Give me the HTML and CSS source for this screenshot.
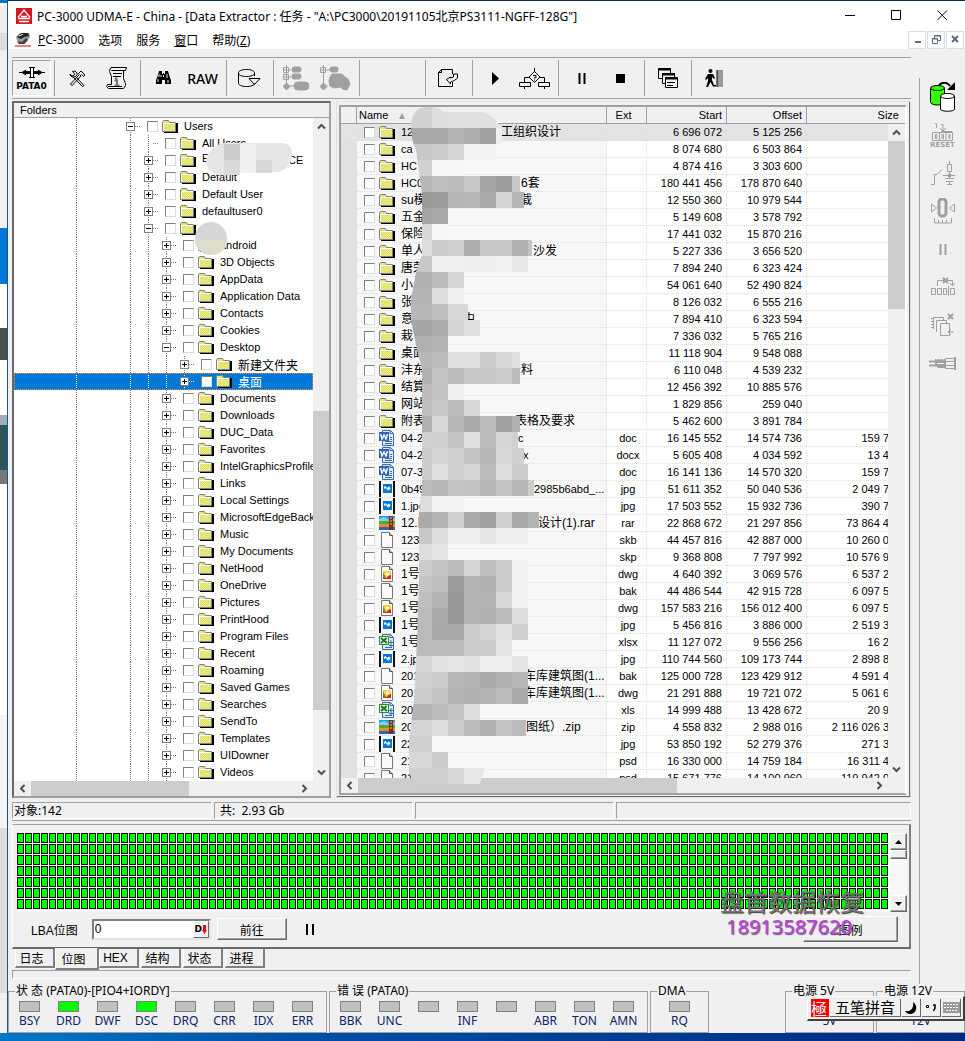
FILE: index.html
```html
<!DOCTYPE html>
<html lang="zh-CN">
<head>
  <meta charset="UTF-8" />
  <meta name="viewport" content="width=device-width, initial-scale=1.0" />
  <title>PC-3000 UDMA-E - Data Extractor</title>
  <link rel="stylesheet" href="styles.css">
</head>
<body>
  <!-- shared icons -->
  <svg class="defs" aria-hidden="true">
    <defs>
      <pattern id="dither" width="2" height="2" patternUnits="userSpaceOnUse">
        <rect width="2" height="2" fill="#cfcfe8"/>
        <rect width="1" height="1" fill="#ffff00"/><rect x="1" y="1" width="1" height="1" fill="#ffff00"/>
      </pattern>
      <pattern id="cell" width="8" height="11" patternUnits="userSpaceOnUse">
        <rect width="7" height="10" fill="#000"/><rect x="1" y="1" width="5" height="8" fill="#00ff00"/>
      </pattern>
      <symbol id="i-folder" viewBox="0 0 16 14">
        <path d="M2 13h13V4" fill="none" stroke="#000" stroke-width="2"/>
        <path d="M.5 12.500V2.500l1-1h5l1 2h6v9z" fill="url(#dither)" stroke="#808080"/>
        <path d="M1.500 12V4.500H13" fill="none" stroke="#fff"/>
      </symbol>
      <symbol id="i-blank" viewBox="0 0 16 16">
        <path d="M2.500.5h8l3 3v12h-11z" fill="#fafafa" stroke="#777"/><path d="M10.500.5v3h3" fill="#ccc" stroke="#555"/>
      </symbol>
      <symbol id="i-doc" viewBox="0 0 16 16">
        <path d="M3.500.5h8l3 3v12h-11z" fill="#dce9f8" stroke="#3a6ea5"/>
        <path d="M11 .5v3h3.500M6 11.500h7M6 13.500h7M11 7.500h2M11 9.500h2" fill="none" stroke="#3a6ea5"/>
        <rect x="0" y="2" width="10" height="9" fill="#2b5fb4"/>
        <path d="M1.500 4l1.500 5 2-4 2 4 1.500-5" fill="none" stroke="#fff" stroke-width="1.500"/>
      </symbol>
      <symbol id="i-xls" viewBox="0 0 16 16">
        <path d="M3.500.5h8l3 3v12h-11z" fill="#dce9f8" stroke="#3a6ea5"/>
        <path d="M11 .5v3h3.500M6 13.500h7M12 6v7M10 11.500h4M10 8.500h4" fill="none" stroke="#3a6ea5"/>
        <rect x=".5" y="2.500" width="9" height="8" fill="#e6f5e2" stroke="#2d8a36"/>
        <path d="M2 4l6 5M7.500 4L2 9" stroke="#187a28" stroke-width="2"/>
      </symbol>
      <symbol id="i-jpg" viewBox="0 0 16 16">
        <rect width="16" height="16" fill="#111"/><path d="M2 0h12v16H2z" fill="#f7f7f7"/>
        <rect x="4" y="3" width="9" height="9" fill="#0078d7"/>
        <path d="M5 8V6l1.500-1L8 7l2-1.500L12 8v-.5h-1V9L9.500 8v2L8 8.500 7 7z" fill="#fff"/>
      </symbol>
      <symbol id="i-rar" viewBox="0 0 16 14">
        <rect width="16" height="5" fill="#2c9be0"/><path d="M0 3l5-2 6 3 5-2v3H0z" fill="#7fd0f5"/>
        <rect y="5" width="16" height="4" fill="#58a636"/><rect y="8" width="16" height="3" fill="#f58a1f"/>
        <rect y="11" width="16" height="3" fill="#2267c5"/><rect x="10" width="4" height="14" fill="#7b2c16"/>
        <path d="M11 2h2M11 5h2M11 8h2" stroke="#f5d64a"/>
      </symbol>
      <symbol id="i-dwg" viewBox="0 0 16 16">
        <path d="M2.500.5h8l3 3v12h-11z" fill="#fff" stroke="#777"/><path d="M10.500.5v3h3" fill="#ddd" stroke="#555"/>
        <rect x="4" y="5" width="8" height="8" fill="#f6d541"/><path d="M4 13h8v-4l-3 1-1 2-4-1z" fill="#e0251b"/><path d="M4 11V6l3 6z" fill="#3fa43c"/><circle cx="8.500" cy="8" r="1.500" fill="#fff"/>
      </symbol>
      <symbol id="i-up" viewBox="0 0 9 9"><path d="M1 6.500L4.500 3 8 6.500" fill="none" stroke="#505050" stroke-width="2"/></symbol>
      <symbol id="i-down" viewBox="0 0 9 9"><path d="M1 2.500L4.500 6 8 2.500" fill="none" stroke="#505050" stroke-width="2"/></symbol>
      <symbol id="i-left" viewBox="0 0 9 9"><path d="M6.500 1L3 4.500 6.500 8" fill="none" stroke="#505050" stroke-width="2"/></symbol>
      <symbol id="i-right" viewBox="0 0 9 9"><path d="M2.500 1L6 4.500 2.500 8" fill="none" stroke="#505050" stroke-width="2"/></symbol>
    </defs>
  </svg>

  <div class="desktop">
    <div class="behind"></div>
    <div class="window">
      <header class="titlebar">
        <svg class="logo" width="16" height="16" viewBox="0 0 16 16"><rect width="16" height="16" fill="#d8161d"/><path d="M2 9.500L8 2l6 7.500M2 10.500h12M3 13.500h10M5 8.500h6" fill="none" stroke="#fff" stroke-width="1.300"/></svg>
        <h1>PC-3000 UDMA-E - China - [Data Extractor : 任务 - "A:\PC3000\20191105北京PS3111-NGFF-128G"]</h1>
        <div class="win-buttons">
          <button aria-label="最小化"><svg width="11" height="11"><path d="M0 5.500h10" stroke="#000"/></svg></button>
          <button aria-label="最大化"><svg width="11" height="11"><path d="M.5.5h9v9h-9z" fill="none" stroke="#000"/></svg></button>
          <button aria-label="关闭"><svg width="11" height="11"><path d="M.5.5l9.500 9.500M10 .5L.5 10" stroke="#000"/></svg></button>
        </div>
      </header>

      <nav class="menubar">
        <svg width="16" height="15" viewBox="0 0 16 15"><path d="M1 5l4-4h9l1 4-5 7H3z" fill="#999"/><path d="M2 5l4-4h7l1 3-5 1-3 2z" fill="#222"/><path d="M3 9l4 1 4-4 2 2-4 4H4z" fill="#444"/><path d="M4 4l4-2" stroke="#fff"/><path d="M0 14h16" stroke="#e00000"/></svg>
        <a href="#"><u>P</u>C-3000</a>
        <a href="#">选项</a>
        <a href="#">服务</a>
        <a href="#"><u>窗</u>口</a>
        <a href="#">帮助(<u>Z</u>)</a>
        <div class="mdi-buttons">
          <button aria-label="最小化窗口"><svg width="9" height="9"><path d="M2 7h6" stroke="#5a6b80" stroke-width="2"/></svg></button>
          <button aria-label="还原窗口"><svg width="9" height="9"><path d="M2.500 3V.5h6v5H6M.5 3.500h5v5h-5zM2 1h7M0 4h6" fill="none" stroke="#5a6b80"/></svg></button>
          <button aria-label="关闭窗口"><svg width="9" height="9"><path d="M1 1l6 6M7 1L1 7" stroke="#5a6b80" stroke-width="2"/></svg></button>
        </div>
      </nav>

      <div class="content">
        <main class="main">
          <div class="toolbar">
            <button class="port">
              <svg width="28" height="13" viewBox="0 0 28 13"><path d="M1 6.500h26" stroke="#000"/><path d="M3 6.500l5-3v6zM25 6.500l-5-3v6z"/><path d="M8 6.500h12" stroke="#000" stroke-width="3"/><path d="M12.500 1v11M15.500 1v11M11 1.500h6M11 11.500h6" stroke="#000"/><path d="M14 2v9" stroke="#fff" stroke-width="2"/></svg>
              <span>PATA0</span>
            </button>
            <div class="group">
              <button aria-label="工具"><svg width="17" height="17" viewBox="0 0 17 17"><path d="M3 15.500L12 6M1.500 14L10.500 4.500M1.500 14l1.500 1.500M9 4l3-3 4 4-1.500 1.500-2-2-1.500 1.500M15 15.500L6 6M13.500 16.500L4.500 7.500M13.500 16.500l1.500-1M1 4l2 2 2-.5.500-2-2-2 2.500-.5 2 2v2L6 7H3L1 5z" fill="none" stroke="#000"/></svg></button>
              <button aria-label="信息"><svg width="24" height="24" viewBox="0 0 24 24"><path d="M6 1.500h15.500l-1 3h-2v8l2 5v2l-2 3H3.500l-2-2 1-2h4v-8l-2-5 .5-2.500zM6.500 4.500h12M8 7.500h9M8 10.500h8" fill="none" stroke="#000"/><path d="M10 12.500h2.500M12 14v6M9.500 19.500h5M9.500 14.500h3" stroke="#777" stroke-width="2"/><path d="M3 20.500h14" stroke="#000"/></svg></button>
            </div>
            <div class="group">
              <button aria-label="查找"><svg width="15" height="14" viewBox="0 0 15 14"><path d="M3 0h3v3h1V2h1v1h1V0h3l2 7 1 2v4H9V9H6v4H0V9l1-2z"/><path d="M3 3v3M5 4v2M11 3v4M2 8v3M12 9v3M7.500 4v2" stroke="#f0f0f0"/></svg></button>
              <button class="raw">RAW</button>
            </div>
            <div class="group">
              <button aria-label="打开磁盘"><svg width="23" height="18" viewBox="0 0 23 18"><path d="M.5 4c0-2 3-3.500 8-3.500s8 1.500 8 3.500-3 3.500-8 3.500S.5 6 .5 4v10c0 2 3 3.500 8 3.500 4 0 8-1 8-3M16.500 4v3M11 9.500h11l-5.500 6z" fill="none" stroke="#000"/></svg></button>
            </div>
            <div class="group">
              <button aria-label="文件树"><svg width="27" height="26" viewBox="0 0 27 26" fill="#a0a0a0" stroke="#a0a0a0"><path d="M.5 2.500h5v5h-5zM3.500 0v22M1 5h7M.5 9.500h5v5h-5zM1 12h7" fill="none"/><rect x="9" y="2" width="9" height="5" rx="2"/><rect x="9" y="9" width="9" height="5" rx="2"/><path d="M3.500 18l3.500 3.500L3.500 25 0 21.500z"/><path d="M7 21h4"/><rect x="11" y="17" width="15" height="8" rx="4"/></svg></button>
              <button aria-label="地图"><svg width="31" height="27" viewBox="0 0 31 27" fill="#a0a0a0" stroke="#a0a0a0"><path d="M.5 2.500h5v5h-5zM3.500 0v22M1 5h9" fill="none"/><rect x="10" y="2" width="8" height="5" rx="2"/><path d="M3.500 18L7 21.500 3.500 25 0 21.500zM10 12l2-3h10l3 3 3 2 2 5-3 6-4-1-3-2-6 1-4-2-1-5z"/></svg></button>
            </div>
            <div class="group blank"></div>
            <div class="group">
              <button aria-label="导出"><svg width="21" height="19" viewBox="0 0 21 19"><path d="M14.500 5V.5h-11l-3 3v14h14V13M.5 3.500h3v-3" fill="none" stroke="#000"/><path d="M19.500 5v4c-2 2-4 3-7 4v2l-4-4.500 4-2.500v1l3-1V5z" fill="#f0f0f0" stroke="#000"/></svg></button>
            </div>
            <div class="group">
              <button aria-label="开始"><svg width="7" height="13"><path d="M0 0l7 6.500L0 13z"/></svg></button>
              <button aria-label="条件"><svg width="31" height="21" viewBox="0 0 31 21"><path d="M15.500 0v4M15.500 3.500l5.500 5.500-5.500 5.500L10 9zM10 9.500H5.500V14M21 9.500h4.500V14M.5 14.500h11v4H.5zM19.500 14.500h11v4h-11zM5.500 19v2M25.500 19v2" fill="none" stroke="#000"/><path d="M14 7.500h3v2h-1.500v1M15 12h1" fill="none" stroke="#000"/></svg></button>
            </div>
            <div class="group">
              <button aria-label="暂停"><svg width="8" height="11"><path d="M1.500 0v11M6.500 0v11" stroke="#000" stroke-width="2"/></svg></button>
              <button aria-label="停止"><svg width="9" height="9"><rect width="9" height="9"/></svg></button>
            </div>
            <div class="group">
              <button aria-label="窗口列表"><svg width="20" height="21" viewBox="0 0 20 21"><g fill="#f0f0f0" stroke="#000"><path d="M.5.5h12v10H.5z"/><path d="M4.500 5.500h12v10h-12z"/><path d="M7.500 9.500h12v10h-12z"/></g><path d="M0 1.500h13M4 6.500h13M7 10.500h13" stroke="#000" stroke-width="2"/><path d="M9 14.500h8M9 17.500h6" stroke="#000"/></svg></button>
            </div>
            <div class="group last">
              <button aria-label="退出"><svg width="19" height="19" viewBox="0 0 19 19"><rect x="12" y="1" width="6" height="17" fill="#999"/><path d="M12 1v17" stroke="#000"/><circle cx="5.500" cy="2" r="2"/><path d="M3 5h5l2 4-1 1-2-2v3l2 5h2v1.500H8L5.500 13 3 18H1l2-6V9l-2 2-1-1z"/></svg></button>
            </div>
          </div>

          <div class="split">
            <section class="folders">
              <h2>Folders</h2>
              <div class="tree-area">
                <div class="tree" id="tree"></div>
                <div class="vscroll tree-v">
                  <button aria-label="向上"><svg width="9" height="9"><use href="#i-up"/></svg></button>
                  <div class="track"><div class="thumb"></div></div>
                  <button aria-label="向下"><svg width="9" height="9"><use href="#i-down"/></svg></button>
                </div>
                <svg class="smudge" width="120" height="115" viewBox="190 140 120 115">
                  <path d="M206 160q3-14 18-17h60q8 2 8 10 0 16-14 19h-32q-16 4-30 3-10-4-10-15z" fill="#e6e6e6"/>
                  <path d="M224 144h16v16h-16z" fill="#cbcbcb"/><path d="M224 160h16v15h-16z" fill="#dadada"/><path d="M240 144h16v29h-16z" fill="#f0f0f0"/><path d="M256 160h16v13h-16z" fill="#d8d8d8"/>
                  <circle cx="211" cy="238" r="16" fill="#d6d6d6"/><path d="M195 240h32c0 20-32 20-32 0z" fill="#dedccb"/>
                </svg>
              </div>
              <div class="hscroll tree-h">
                <button aria-label="向左"><svg width="9" height="9"><use href="#i-left"/></svg></button>
                <div class="track"><div class="thumb"></div></div>
                <button aria-label="向右"><svg width="9" height="9"><use href="#i-right"/></svg></button>
              </div>
            </section>

            <section class="files">
              <div class="files-frame">
                <div class="list-area">
                  <table>
                    <thead>
                      <tr>
                        <th class="c-mark"></th>
                        <th class="c-name">Name <span class="sort"></span></th>
                        <th class="c-ext">Ext</th>
                        <th class="c-num">Start</th>
                        <th class="c-num">Offset</th>
                        <th class="c-size">Size</th>
                      </tr>
                    </thead>
                    <tbody id="files"></tbody>
                  </table>
                  <div class="vscroll list-v">
                    <button aria-label="向上"><svg width="9" height="9"><use href="#i-up"/></svg></button>
                    <div class="track"><div class="thumb"></div></div>
                    <button aria-label="向下"><svg width="9" height="9"><use href="#i-down"/></svg></button>
                  </div>
                </div>
                <div class="hscroll list-h">
                  <button aria-label="向左"><svg width="9" height="9"><use href="#i-left"/></svg></button>
                  <div class="track"><div class="thumb"></div></div>
                  <button aria-label="向右"><svg width="9" height="9"><use href="#i-right"/></svg></button>
                </div>
                <svg class="mosaic" id="mosaic" width="140" height="683" viewBox="408 107 140 683"></svg>
              </div>
            </section>
          </div>

          <div class="counts">
            <span>对象:142</span><span>共:&nbsp; 2.93 Gb</span><span></span><span></span>
          </div>

          <section class="map-panel">
            <div class="map-row">
              <svg class="map"><rect width="871" height="77" fill="url(#cell)"/></svg>
              <div class="classic-scroll">
                <button aria-label="向上"><svg width="7" height="4"><path d="M0 4l3.500-4L7 4z"/></svg></button>
                <div class="classic-thumb"></div>
                <button aria-label="向下"><svg width="7" height="4"><path d="M0 0l3.500 4L7 0z"/></svg></button>
              </div>
            </div>
            <div class="map-tools">
              <label for="lba">LBA位图</label>
              <div class="lba-box">
                <input type="text" id="lba" value="0" />
                <button>D<svg width="5" height="9"><path d="M1 0h3v5h1L2.500 9 0 5h1z" fill="#f00"/></svg></button>
              </div>
              <button class="raised go">前往</button>
              <button class="pause" aria-label="暂停"><svg width="8" height="11"><path d="M1 0v11M7 0v11" stroke="#000" stroke-width="2"/></svg></button>
              <button class="raised legend">图例</button>
            </div>
            <div class="watermark"><b>盘首数据恢复</b><span>18913587620</span></div>
          </section>

          <div class="tabs">
            <button>日志</button><button class="active">位图</button><button>HEX</button><button>结构</button><button>状态</button><button>进程</button>
          </div>
          <div class="strip"></div>
        </main>

        <aside class="side">
          <button aria-label="磁盘切换"><svg width="26" height="30" viewBox="0 0 26 30"><path d="M.5 6v14c0 4 14 4 14 0V6" fill="#3f0" stroke="#000"/><ellipse cx="7.500" cy="6" rx="7" ry="2.500" fill="#3f0" stroke="#000"/><path d="M10.500 14v13c0 3 14 3 14 0V14" fill="#fff" stroke="#000"/><ellipse cx="17.500" cy="14" rx="7" ry="2.500" fill="#fff" stroke="#000"/><path d="M9 3c5-4 9-2 11 1" fill="none" stroke="#000" stroke-width="2"/><path d="M25 0v8h-8z"/></svg></button>
          <button class="reset"><svg width="22" height="19" viewBox="0 0 22 19"><path d="M3 1.500h1.500V6M9 2.500h2V8M8 6l3 3 3-3M.5 10.500h20v8H.5zM7.500 10v8M14 10v8M3.500 12.500h1.500v4H3.500zM10 12.500h1.500v4H10zM17 12.500h1v4h-1zM9 9.500h11" fill="none" stroke="#a0a0a0"/></svg><span>RESET</span></button>
          <button aria-label="电源"><svg width="24" height="25" viewBox="0 0 24 25"><path d="M0 23.500h3.500v-10H6l5-5M12 14.500h12M18.500 0v3M16.500 3.500h4v7h-4zM18.500 11v6M14 17.500h9M15 20.500h7M18.500 20v4M16 23.500h5" fill="none" stroke="#a0a0a0"/><circle cx="18.500" cy="14.500" r="2" fill="#a0a0a0"/></svg></button>
          <button aria-label="归零"><svg width="24" height="26" viewBox="0 0 24 26"><path d="M.5 6v8l5-4zM23.500 6v8l-5-4zM3.500 20v5h17v-5M7.500 22v3M11.500 22v3M15.500 22v3" fill="none" stroke="#a0a0a0"/><rect x="8" y="1" width="7" height="17" rx="3" fill="none" stroke="#a0a0a0" stroke-width="3"/></svg></button>
          <button aria-label="暂停"><svg width="8" height="11"><path d="M1.500 0v11M6.500 0v11" stroke="#a0a0a0" stroke-width="2"/></svg></button>
          <button aria-label="删除扇区"><svg width="24" height="20" viewBox="0 0 24 20"><path d="M.5 11.500h4v6h-4zM6.500 11.500h4v6h-4zM12.500 11.500h3v6h-3zM17.500 9v10M19.500 11.500h4v6h-4zM6.500 9V3.500h15V8M19 6l2.500 3L24 6" fill="none" stroke="#a0a0a0"/><path d="M12 1l5 5M17 1l-5 5" stroke="#a0a0a0" stroke-width="2"/></svg></button>
          <button aria-label="复制"><svg width="24" height="24" viewBox="0 0 24 24"><path d="M9.500 10.500h9v12h-9zM5.500 19V7.500h10V10M2.500 16V4.500h10V7M0 5.500h2M0 8.500h2M0 11.500h2M0 14.500h2M17 19h6M20 16l-3 3 3 3" fill="none" stroke="#a0a0a0"/><path d="M17 1l5 5M22 1l-5 5" stroke="#a0a0a0" stroke-width="2"/></svg></button>
          <button aria-label="连接"><svg width="27" height="13" viewBox="0 0 27 13"><path d="M0 4.500h8M0 8.500h8" stroke="#a0a0a0" stroke-width="2"/><path d="M16.500 1.500h9v10h-9zM16 4.500h10M16 8.500h10" fill="none" stroke="#a0a0a0"/><path d="M26 0v13" stroke="#a0a0a0" stroke-width="2"/><path d="M6 2h10v9H9L6 8z" fill="#a0a0a0"/><path d="M8 1v2M11 1v2M14 1v2M8 6.500h7" stroke="#f0f0f0"/></svg></button>
        </aside>
      </div>

      <footer class="lights">
        <fieldset class="eight">
          <legend>状 态 (PATA0)-[PIO4+IORDY]</legend>
          <span><i></i>BSY</span><span><i class="on"></i>DRD</span><span><i></i>DWF</span><span><i class="on"></i>DSC</span><span><i></i>DRQ</span><span><i></i>CRR</span><span><i></i>IDX</span><span><i></i>ERR</span>
        </fieldset>
        <fieldset class="eight">
          <legend>错 误 (PATA0)</legend>
          <span><i></i>BBK</span><span><i></i>UNC</span><span><i></i></span><span><i></i>INF</span><span><i></i></span><span><i></i>ABR</span><span><i></i>TON</span><span><i></i>AMN</span>
        </fieldset>
        <fieldset class="dma">
          <legend>DMA</legend>
          <span><i></i>RQ</span>
        </fieldset>
        <fieldset class="power first">
          <legend>电源 5V</legend>
          <span>5V</span>
        </fieldset>
        <fieldset class="power">
          <legend>电源 12V</legend>
          <span>12V</span>
        </fieldset>
      </footer>
      <div class="ime">
        <b>極</b><span>五笔拼音</span>
        <button aria-label="全角半角"><svg width="12" height="12"><path d="M8 0c6 4 3 12-3 12-2 0-4-1-5-3 6 1 9-3 8-9z"/></svg></button>
        <button aria-label="标点"><svg width="10" height="8"><path d="M.5 1.500h2v2h-2z" fill="none" stroke="#000"/><path d="M7 1h2v3L7.500 7" fill="none" stroke="#000" stroke-width="1.500"/></svg></button>
        <button aria-label="软键盘"><svg width="17" height="11"><rect width="17" height="11" fill="#999"/><path d="M1 2.500h15M1 5.500h15M3 8.500h11" stroke="#fff" stroke-dasharray="2 1"/></svg></button>
      </div>
    </div>
  </div>

  <script src="script.js"></script>
</body>
</html>
```
FILE: styles.css
```css
* {
  box-sizing: border-box;
}
body {
  margin: 0;
  min-height: 100vh;
  font-family: "Liberation Sans", "Noto Sans CJK SC", sans-serif;
  font-size: 11px;
  color: #000;
  background: linear-gradient(90deg, #0078c8, #0050a8 30%, #002a80);
}
button {
  padding: 0;
  border: 0;
  background: none;
  font: inherit;
  color: inherit;
  display: flex;
  align-items: center;
  justify-content: center;
}
a {
  color: inherit;
  text-decoration: none;
}
svg {
  display: block;
  flex: none;
}
.defs {
  position: absolute;
  width: 0;
  height: 0;
}
.desktop {
  display: grid;
  grid-template-columns: 7px 1fr;
}
/* edge of the window behind */
.behind {
  background: linear-gradient(#0078d7 3px, #fff 3px 6px, #eee 6px 33px, #ddd 33px 50px, #f0f0f0 50px 228px, #0078d7 228px 284px, #fff 284px 328px, #4c4f50 328px 360px, #fff 360px 415px, #9fb0b5 415px 425px, #2c555a 425px 470px, #777 470px 484px, #fff 484px 715px, #f4f4f4 715px 828px, #dcdcdc 828px 993px, #f0f0f0 993px);
}
.window {
  position: relative;
  background: #f0f0f0;
  border-top: 1px solid #0c2850;
  border-left: 1px solid #17568c;
  min-width: 0;
}

/* title and menu */
.titlebar {
  display: flex;
  align-items: center;
  height: 29px;
  padding-left: 8px;
  background: #fff;
}
.titlebar h1 {
  margin: 0 0 0 5px;
  flex: 1;
  min-width: 0;
  overflow: hidden;
  white-space: nowrap;
  font: 12px "Noto Sans", "Noto Sans CJK SC", sans-serif;
}
.win-buttons {
  display: flex;
}
.win-buttons button {
  width: 46px;
  height: 28px;
}
.menubar {
  display: flex;
  align-items: center;
  gap: 14px;
  height: 19px;
  padding-left: 7px;
  background: #fff;
  font: 12px "Noto Sans", "Noto Sans CJK SC", sans-serif;
}
.menubar svg + a {
  margin-left: -7px;
}
.mdi-buttons {
  display: flex;
  gap: 1px;
  margin-left: auto;
  margin-right: 1px;
}
.mdi-buttons button {
  width: 18px;
  height: 18px;
  border: 1px solid #dcdcdc;
  background: #fff;
}

.content {
  display: flex;
}
.main {
  flex: 1;
  min-width: 0;
  padding: 8px 8px 5px 4px;
}

/* toolbar */
.toolbar {
  display: flex;
  height: 42px;
  padding: 2px 0;
  border-top: 1px solid #a0a0a0;
  border-bottom: 1px solid #a0a0a0;
}
.port {
  flex-direction: column;
  gap: 2px;
  width: 39px;
  margin-right: 3px;
  border: 1px solid #fff;
  border-top-color: #a0a0a0;
  border-left-color: #a0a0a0;
  font: bold 9px "DejaVu Sans", sans-serif;
}
.group {
  display: flex;
  padding: 0 4px 0 3px;
  border-left: 1px solid #a0a0a0;
}
.group button {
  width: 39px;
}
.group.blank {
  width: 66px;
}
.group .raw {
  font: 500 14px "Noto Sans", sans-serif;
}

/* panels */
.split {
  display: flex;
  gap: 5px;
  margin-top: 2px;
}
.folders {
  display: flex;
  flex-direction: column;
  width: 319px;
  border: 2px solid #a0a0a0;
  border-top-color: #696969;
  border-left-color: #696969;
}
.folders h2 {
  margin: 0;
  height: 15px;
  padding-left: 6px;
  border-bottom: 1px solid #a0a0a0;
  font-size: 11px;
  font-weight: normal;
  line-height: 15px;
}
.tree-area {
  position: relative;
  display: flex;
}
.tree {
  flex: 1;
  min-width: 0;
  overflow: hidden;
  background: #fff;
}
.node {
  display: flex;
  align-items: center;
  height: 17px;
  padding-bottom: 1px;
  white-space: nowrap;
}
.guide {
  flex: none;
  width: 18px;
  height: 17px;
  border-right: 1px dotted #808080;
}
.guide.root {
  width: 63px;
}
.guide.branch {
  width: 54px;
}
.toggle {
  flex: none;
  width: 9px;
  height: 9px;
  margin-left: -5px;
  border: 1px solid #808080;
  background: #fff;
  color: #000;
}
.toggle.none {
  visibility: hidden;
}
.toggle::after {
  content: "";
  width: 5px;
  height: 5px;
  background: linear-gradient(#000, #000) center / 5px 1px no-repeat;
}
.toggle.plus::after {
  background: linear-gradient(#000, #000) center / 5px 1px no-repeat, linear-gradient(#000, #000) center / 1px 5px no-repeat;
}
.dots {
  flex: none;
  width: 5px;
  margin-right: 7px;
  border-top: 1px dotted #808080;
}
.node label {
  display: flex;
  align-items: center;
}
input[type="checkbox"] {
  flex: none;
  appearance: none;
  width: 11px;
  height: 11px;
  margin: 0;
  border: 1px solid #dcdcdc;
  border-top-color: #808080;
  border-left-color: #808080;
  background: #fff;
}
.node label svg {
  margin: 0 6px 0 4px;
}
.node.selected {
  background: #0078d7;
  color: #fff;
  outline: 1px dotted #ff8728;
  outline-offset: -1px;
}
.node.selected .guide,
.node.selected .dots {
  border-color: #fff;
}
.cjk {
  font-size: 12px;
}
.smudge {
  position: absolute;
  left: 176px;
  top: 22px;
}

/* flat scroll bars */
.vscroll,
.hscroll {
  display: flex;
  background: #f0f0f0;
}
.vscroll {
  flex-direction: column;
  flex: none;
  width: 16px;
}
.hscroll {
  height: 15px;
}
.vscroll button {
  height: 17px;
}
.hscroll button {
  width: 17px;
}
.track {
  flex: 1;
  display: flex;
}
.vscroll .track {
  flex-direction: column;
}
.thumb {
  background: #cdcdcd;
}
.tree-v .track {
  padding-top: 276px;
}
.tree-v .thumb {
  height: 299px;
}
.tree-h {
  margin-right: 16px;
}
.tree-h .thumb {
  width: 158px;
}
.list-v .thumb {
  height: 168px;
}
.list-h .thumb {
  width: 319px;
}

/* file list */
.files {
  flex: 1;
  min-width: 0;
  display: flex;
  padding: 3px 2px 1px 2px;
  border: 1px solid #fff;
  border-right: 2px solid #696969;
  border-bottom: 2px solid #696969;
  outline: 1px solid #e0e0e0;
  outline-offset: -1px;
}
.files-frame {
  position: relative;
  flex: 1;
  min-width: 0;
  display: flex;
  flex-direction: column;
  border: 2px solid #a0a0a0;
  border-right-color: #fff;
  border-bottom-color: #a0a0a0;
}
.list-area {
  flex: 1 1 0;
  min-height: 0;
  overflow: hidden;
  display: grid;
  grid-template-columns: 1fr 17px;
  grid-template-rows: 100%;
  background: #fff;
}
table {
  grid-area: 1 / 1 / 2 / 3;
  align-self: start;
  width: 100%;
  table-layout: fixed;
  border-collapse: separate;
  border-spacing: 0;
}
.list-v {
  grid-area: 1 / 2 / 2 / 3;
  width: 17px;
  margin-top: 17px;
}
.list-h {
  padding-right: 17px;
}
th {
  height: 17px;
  padding: 0 4px 0 2px;
  background: #f0f0f0;
  border-right: 1px solid #a0a0a0;
  border-bottom: 1px solid #a0a0a0;
  font-weight: normal;
  line-height: 14px;
  text-align: right;
}
.c-mark {
  width: 16px;
}
.c-name {
  width: 250px;
  text-align: left;
}
.c-ext {
  width: 40px;
  text-align: center;
}
th.c-ext {
  padding-right: 8px;
}
.c-num {
  width: 80px;
}
th.c-size {
  padding-right: 6px;
  border-right: 0;
}
.sort {
  display: inline-block;
  margin-left: 8px;
  border: 3px solid transparent;
  border-top: 0;
  border-bottom: 6px solid #a0a0a0;
}
td {
  height: 17px;
  padding: 0 4px 0 0;
  overflow: hidden;
  border-right: 1px dotted #e0e0e0;
  border-bottom: 1px dotted #e0e0e0;
  line-height: 16px;
  text-align: right;
  white-space: nowrap;
}
td.c-mark {
  background: #e1e1e1;
}
td.c-name {
  padding-left: 7px;
  background: #f7f7f7;
}
td.c-ext {
  padding-left: 3px;
  padding-right: 0;
  text-align: center;
}
td.c-size {
  padding-right: 16px;
  border-right: 0;
}
tbody tr:first-child td {
  background: #e3e3e3;
}
td label {
  display: flex;
  align-items: center;
  height: 16px;
}
td label svg {
  margin: 0 6px 0 4px;
}
.part {
  flex: none;
  height: 16px;
}
.mosaic {
  position: absolute;
  left: 67px;
  top: 0;
}

/* object counts */
.counts {
  display: grid;
  grid-template-columns: 200px 199px 199px 1fr;
  gap: 2px;
  margin-top: 4px;
  padding-bottom: 1px;
  border-bottom: 1px solid #a0a0a0;
}
.counts span {
  height: 17px;
  padding-left: 1px;
  border: 1px solid #fff;
  border-top-color: #a0a0a0;
  border-left-color: #a0a0a0;
  font: 12px "Noto Sans", "Noto Sans CJK SC", sans-serif;
  line-height: 16px;
  white-space: nowrap;
}
.counts span + span {
  padding-left: 5px;
}

/* sector map */
.map-panel {
  position: relative;
  margin-top: 3px;
  padding: 8px 2px 4px 4px;
  border-top: 1px solid #a0a0a0;
  border-right: 2px solid #808080;
  border-bottom: 2px solid #696969;
  border-left: 1px solid #fff;
}
.map-row {
  display: flex;
  height: 79px;
  background: #fff;
}
.map {
  flex: 1;
  min-width: 0;
  height: 77px;
}
.classic-scroll {
  display: flex;
  flex-direction: column;
  width: 17px;
  background: #f8f8f8;
}
.classic-scroll button,
.classic-thumb,
.raised {
  border: 1px solid #fff;
  border-right-color: #696969;
  border-bottom-color: #696969;
  background: #f0f0f0;
  box-shadow: inset -1px -1px 0 #a0a0a0;
}
.classic-scroll button {
  height: 17px;
}
.classic-thumb {
  height: 9px;
  margin-bottom: auto;
}
.map-tools {
  display: flex;
  align-items: center;
  height: 28px;
  margin-top: 3px;
  padding: 0 9px 0 14px;
  font-size: 12px;
}
.lba-box {
  display: flex;
  width: 119px;
  height: 21px;
  margin: 0 6px 0 14px;
  border: 2px solid #808080;
  border-right-color: #e3e3e3;
  border-bottom-color: #e3e3e3;
  background: #fff;
}
.lba-box input {
  flex: 1;
  min-width: 0;
  padding: 0 1px;
  border: 0;
  outline: 0;
  background: none;
  font: inherit;
}
.lba-box button {
  width: 16px;
  border: 1px solid #fff;
  border-right-color: #696969;
  border-bottom-color: #696969;
  background: #f0f0f0;
  font: bold 9px "DejaVu Sans", sans-serif;
}
.go {
  width: 70px;
  height: 22px;
}
.pause {
  margin-left: 19px;
}
.legend {
  width: 95px;
  height: 26px;
  margin-left: auto;
}
.watermark {
  position: absolute;
  right: 45px;
  top: 62px;
  display: flex;
  flex-direction: column;
}
.watermark b {
  font: 24px/28px "Noto Sans CJK SC", sans-serif;
  color: #777;
  text-shadow: 1px 1px 1px #333;
}
.watermark span {
  padding-left: 6px;
  font: 20px/24px "Noto Sans", sans-serif;
  color: #c040f0;
  text-shadow: 1px 1px 1px #555;
}

/* tabs */
.tabs {
  display: flex;
  gap: 2px;
  align-items: flex-start;
  height: 21px;
  padding-left: 3px;
}
.tabs button {
  width: 40px;
  height: 19px;
  padding-right: 6px;
  border-left: 1px solid #fff;
  border-right: 2px solid #808080;
  border-bottom: 2px solid #808080;
  font-size: 12px;
}
.tabs .active {
  position: relative;
  width: 44px;
  height: 22px;
  margin: -1px -2px 0;
  background: #f0f0f0;
}
.strip {
  height: 9px;
  border: 1px solid #fff;
  border-top-color: #a0a0a0;
  border-left-color: #a0a0a0;
}

/* right icon bar */
.side {
  display: flex;
  flex-direction: column;
  align-items: center;
  width: 46px;
  margin-top: 29px;
  border-left: 1px solid #a0a0a0;
}
.side button {
  flex-direction: column;
  width: 100%;
  height: 38px;
}
.reset span {
  font: bold 7px "DejaVu Sans", sans-serif;
  color: #a0a0a0;
  line-height: 8px;
}

/* drive lights */
.lights {
  display: flex;
  gap: 2px;
  font: 12px "Noto Sans", "Noto Sans CJK SC", sans-serif;
}
fieldset {
  display: flex;
  height: 49px;
  min-width: 0;
  margin: 0;
  padding: 3px 1px 0;
  border: 1px solid #a0a0a0;
}
legend {
  padding: 0 1px;
  margin-left: 5px;
  height: 14px;
  line-height: 14px;
  white-space: nowrap;
}
.eight {
  width: 319px;
}
.dma {
  width: 59px;
}
.power {
  width: 89px;
}
.power.first {
  margin-left: auto;
}
fieldset span {
  display: flex;
  flex-direction: column;
  justify-content: flex-start;
  align-items: center;
  width: 39px;
  color: #0a246a;
  line-height: 17px;
}
.dma span,
.power span {
  width: 100%;
}
.power span {
  justify-content: flex-end;
  height: 28px;
}
fieldset i {
  width: 21px;
  height: 11px;
  border: 1px solid #808080;
  background: #c0c0c0;
}
fieldset i.on {
  background: #00ff00;
}

/* input method bar */
.ime {
  position: absolute;
  right: 0;
  bottom: 12px;
  display: flex;
  gap: 1px;
  width: 158px;
  height: 25px;
  padding: 2px;
  border: 1px solid #fff;
  border-right: 2px solid #404040;
  border-bottom: 2px solid #404040;
  background: #f0f0f0;
}
.ime b {
  width: 18px;
  margin-left: 1px;
  background: #f00;
  color: #fff;
  font: 16px/19px "Noto Sans CJK SC", sans-serif;
}
.ime span {
  flex: 1;
  border-right: 1px solid #696969;
  border-bottom: 1px solid #696969;
  font-size: 15px;
  line-height: 18px;
  text-align: center;
}
.ime button {
  width: 19px;
  border-right: 1px solid #696969;
  border-bottom: 1px solid #696969;
}
```
FILE: script.js
```js
// folder tree: [level, name, toggle]
const folders = [
  [0, 'Users', '-'], [1, 'All Users', ''], [1, 'E', '+', 'CE'], [1, 'Default', '+'],
  [1, 'Default User', '+'], [1, 'defaultuser0', '+'], [1, '', '-'],
  [2, 'android', '+'], [2, '3D Objects', '+'], [2, 'AppData', '+'], [2, 'Application Data', '+'],
  [2, 'Contacts', '+'], [2, 'Cookies', '+'], [2, 'Desktop', '-'],
  [3, '新建文件夹', '+'], [3, '桌面', '+'],
  [2, 'Documents', '+'], [2, 'Downloads', '+'], [2, 'DUC_Data', '+'], [2, 'Favorites', '+'],
  [2, 'IntelGraphicsProfiles', '+'], [2, 'Links', '+'], [2, 'Local Settings', '+'],
  [2, 'MicrosoftEdgeBack', '+'], [2, 'Music', '+'], [2, 'My Documents', '+'], [2, 'NetHood', '+'],
  [2, 'OneDrive', '+'], [2, 'Pictures', '+'], [2, 'PrintHood', '+'], [2, 'Program Files', '+'],
  [2, 'Recent', '+'], [2, 'Roaming', '+'], [2, 'Saved Games', '+'], [2, 'Searches', '+'],
  [2, 'SendTo', '+'], [2, 'Templates', '+'], [2, 'UIDowner', '+'], [2, 'Videos', '+']
];

document.getElementById('tree').innerHTML = folders.map(([level, name, toggle, tail]) => {
  const kind = toggle === '+' ? 'plus' : toggle === '-' ? 'minus' : 'none';
  let label = name;
  if (tail) label = `<span class="part" style="width:86px">${name}</span>${tail}`;
  if (level === 3) label = `<span class="cjk">${name}</span>`;
  return `<div class="node${name === '桌面' ? ' selected' : ''}">
    <i class="guide root"></i><i class="guide branch"></i>${'<i class="guide"></i>'.repeat(level)}
    <button class="toggle ${kind}" aria-label="展开"></button><i class="dots"></i>
    <label><input type="checkbox"><svg width="16" height="14"><use href="#i-folder"/></svg>${label}</label>
  </div>`;
}).join('');

// files: icon, name parts with their x offset, ext, start, offset, size
const files = [
  ['folder', [[0, '12'], [100, '工组织设计']], '', '6 696 072', '5 125 256', ''],
  ['folder', [[0, 'ca']], '', '8 074 680', '6 503 864', ''],
  ['folder', [[0, 'HC']], '', '4 874 416', '3 303 600', ''],
  ['folder', [[0, 'HC0'], [120, '6套']], '', '180 441 456', '178 870 640', ''],
  ['folder', [[0, 'su模'], [119, '载']], '', '12 550 360', '10 979 544', ''],
  ['folder', [[0, '五金']], '', '5 149 608', '3 578 792', ''],
  ['folder', [[0, '保险']], '', '17 441 032', '15 870 216', ''],
  ['folder', [[0, '单人'], [132, '沙发']], '', '5 227 336', '3 656 520', ''],
  ['folder', [[0, '唐荣']], '', '7 894 240', '6 323 424', ''],
  ['folder', [[0, '小']], '', '54 061 640', '52 490 824', ''],
  ['folder', [[0, '张']], '', '8 126 032', '6 555 216', ''],
  ['folder', [[0, '意'], [62, '中']], '', '7 894 410', '6 323 594', ''],
  ['folder', [[0, '栽']], '', '7 336 032', '5 765 216', ''],
  ['folder', [[0, '桌面']], '', '11 118 904', '9 548 088', ''],
  ['folder', [[0, '沣东'], [108, '资料']], '', '6 110 048', '4 539 232', ''],
  ['folder', [[0, '结算']], '', '12 456 392', '10 885 576', ''],
  ['folder', [[0, '网站']], '', '1 829 856', '259 040', ''],
  ['folder', [[0, '附表'], [114, '表格及要求']], '', '5 462 600', '3 891 784', ''],
  ['doc', [[0, '04-2'], [117, 'c']], 'doc', '16 145 552', '14 574 736', '159 7'],
  ['doc', [[0, '04-2'], [122, 'x']], 'docx', '5 605 408', '4 034 592', '13 4'],
  ['doc', [[0, '07-3']], 'doc', '16 141 136', '14 570 320', '159 7'],
  ['jpg', [[0, '0b49'], [133, '2985b6abd_...']], 'jpg', '51 611 352', '50 040 536', '2 049 7'],
  ['jpg', [[0, '1.jpg']], 'jpg', '17 503 552', '15 932 736', '390 7'],
  ['rar', [[0, '12.图'], [137, '设计(1).rar']], 'rar', '22 868 672', '21 297 856', '73 864 4'],
  ['blank', [[0, '123']], 'skb', '44 457 816', '42 887 000', '10 260 0'],
  ['blank', [[0, '123']], 'skp', '9 368 808', '7 797 992', '10 576 9'],
  ['dwg', [[0, '1号']], 'dwg', '4 640 392', '3 069 576', '6 537 2'],
  ['blank', [[0, '1号']], 'bak', '44 486 544', '42 915 728', '6 097 5'],
  ['dwg', [[0, '1号']], 'dwg', '157 583 216', '156 012 400', '6 097 5'],
  ['jpg', [[0, '1号']], 'jpg', '5 456 816', '3 886 000', '2 519 3'],
  ['xls', [[0, '1号']], 'xlsx', '11 127 072', '9 556 256', '16 2'],
  ['jpg', [[0, '2.jpg']], 'jpg', '110 744 560', '109 173 744', '2 898 8'],
  ['blank', [[0, '201'], [123, '车库建筑图(1...']], 'bak', '125 000 728', '123 429 912', '4 591 4'],
  ['dwg', [[0, '201'], [123, '车库建筑图(1...']], 'dwg', '21 291 888', '19 721 072', '5 061 6'],
  ['xls', [[0, '20']], 'xls', '14 999 488', '13 428 672', '20 9'],
  ['rar', [[0, '20'], [80, '变'], [125, '图纸）.zip']], 'zip', '4 558 832', '2 988 016', '2 116 026 3'],
  ['jpg', [[0, '22']], 'jpg', '53 850 192', '52 279 376', '271 3'],
  ['blank', [[0, '21']], 'psd', '16 330 000', '14 759 184', '16 311 4'],
  ['blank', [[0, '21']], 'psd', '15 671 776', '14 100 960', '119 942 0']
];

document.getElementById('files').innerHTML = files.map(([icon, parts, ext, start, offset, size]) => {
  const name = parts.map(([x, text], i) => {
    const next = parts[i + 1];
    const cjk = /[\u4e00-\u9fff]/.test(text) ? ' cjk' : '';
    return next
      ? `<span class="part${cjk}" style="width:${next[0] - x}px">${text}</span>`
      : `<span class="part${cjk}">${text}</span>`;
  }).join('');
  return `<tr><td class="c-mark"></td>
    <td class="c-name"><label><input type="checkbox"><svg width="16" height="${icon === 'folder' ? 14 : 16}"><use href="#i-${icon}"/></svg>${name}</label></td>
    <td class="c-ext">${ext}</td><td>${start}</td><td>${offset}</td><td class="c-size">${size}</td></tr>`;
}).join('');

// grey blocks over the names, one string per 16px line, first line at y 112
// "tone" or "tone:width"
const blocks = [
  'd2 dd e0 e0 e0 e4:6', 'a8 a8 b4 ae a0 f0:6', 'c8 cc d6 f4 f4', 'd2 f6 f6', 'b8 c0 bb c8 a5 9e c8:8', '9a 9c b5 b8 aa d4 b5:12',
  'a5 a8', 'd8 f6', 'dd cc d0 ae c8 c8 b0 c4:4', 'c8 f0 f0 ee ee f2 e8', 'b0 bb d5', 'b4 dd f0',
  'b8 c0 d8:20', 'a5 ac d4 e0', 'b0 b4', 'b8 bb e0 e0 cc d8 e0:8', 'b0 c4 bb c8 c8 cc bb:8',
  'bb c2 f0', 'bf c8 bb d8', 'b0 d8 b8 aa bb a0 b0:8', 'd2 d0 c4 e0 bb d6 d0:6', 'cc d4 d0 c4 b8 d8 d0:12',
  'cc e0 d0 d6 bb dd cc', 'bb b8 c4 c2 b8 c4 b8 cc:6', 'dd f4 f4', 'aa b4 d0 aa a0 d0 a8 b4', 'c8 dd ee ee e6 ee ee',
  'dd e4', 'cc c4 bb d6 bf cc f2', 'c4 c0 9c b4 b0 cc f2', 'c0 b4 98 b4 b4 d8 f2', 'bb aa 98 b4 b0 bb dd',
  'bb a8 a8 cc d4 e2 d0', 'bb bb bb cc cc e4', 'd6 e2 e6 e2 ee ee e4', 'd0 cc b8 b4 aa b0 b8', 'cc c4 b4 b0 b4 bb aa',
  'b4 bb c4 dd', 'd4 dd cc bb b0 c4 bb:14', 'd0', 'd8 cc', 'd0 d0 d8 e8 e4', 'cc cc cc cc'
];

let rects = '';
blocks.forEach((line, row) => {
  line.split(' ').forEach((block, col) => {
    const [tone, size] = block.split(':');
    const x = col === 0 ? 408 : 416 + col * 16;
    const width = size || (col === 0 ? 24 : col === 7 ? 11 : 16);
    const y = row === 0 ? 107 : 112 + row * 16;
    const height = row === 0 ? 21 : 16;
    rects += `<rect x="${x}" y="${y}" width="${width}" height="${height}" fill="#${tone}${tone}${tone}"/>`;
  });
});
document.getElementById('mosaic').innerHTML = `
  <clipPath id="smear"><path d="M411 125Q412 108 426 107H434Q440 108 443 112H482Q495 115 502 130V144H548V745H490L482 778Q478 790 465 790H428Q412 784 409 772V740L414 700L417 640L419 580V510L422 490V370L416 345L411 320V300L416 272L422 255V195L416 150Q411 140 411 125Z"/></clipPath>
  <g clip-path="url(#smear)">${rects}</g>`;
```
